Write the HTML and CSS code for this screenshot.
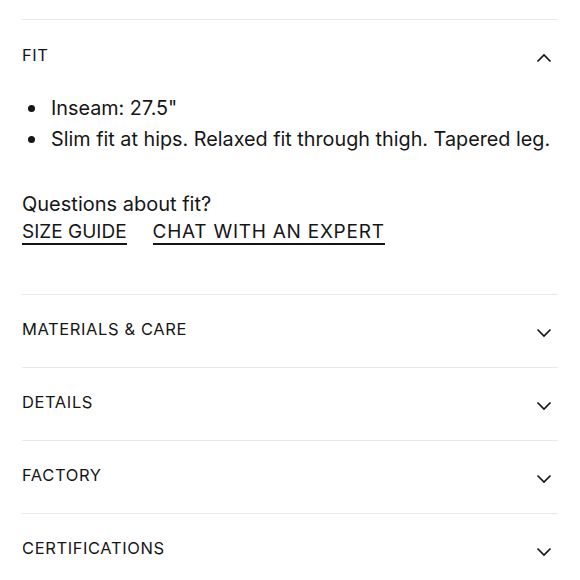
FILE: index.html
```html
<!DOCTYPE html>
<html lang="en">
<head>
<meta charset="utf-8">
<link rel="stylesheet" href="styles.css">
</head>
<body>
<div class="accordion">
  <section class="item open">
    <div class="item-header">
      <span class="item-title">FIT</span>
      <svg class="chevron" width="16" height="10" viewBox="0 0 16 10"><polyline points="1.5,8.5 8,2 14.5,8.5" fill="none" stroke="#111" stroke-width="1.6"/></svg>
    </div>
    <div class="item-body">
      <ul class="bullets">
        <li>Inseam: 27.5"</li>
        <li>Slim fit at hips. Relaxed fit through thigh. Tapered leg.</li>
      </ul>
      <p class="question">Questions about fit?</p>
      <div class="links">
        <a class="link" href="#">SIZE GUIDE</a>
        <a class="link link-wide" href="#">CHAT WITH AN EXPERT</a>
      </div>
    </div>
  </section>
  <section class="item">
    <div class="item-header">
      <span class="item-title">MATERIALS &amp; CARE</span>
      <svg class="chevron" width="16" height="10" viewBox="0 0 16 10"><polyline points="1.5,1.5 8,8 14.5,1.5" fill="none" stroke="#111" stroke-width="1.6"/></svg>
    </div>
  </section>
  <section class="item">
    <div class="item-header">
      <span class="item-title">DETAILS</span>
      <svg class="chevron" width="16" height="10" viewBox="0 0 16 10"><polyline points="1.5,1.5 8,8 14.5,1.5" fill="none" stroke="#111" stroke-width="1.6"/></svg>
    </div>
  </section>
  <section class="item">
    <div class="item-header">
      <span class="item-title">FACTORY</span>
      <svg class="chevron" width="16" height="10" viewBox="0 0 16 10"><polyline points="1.5,1.5 8,8 14.5,1.5" fill="none" stroke="#111" stroke-width="1.6"/></svg>
    </div>
  </section>
  <section class="item">
    <div class="item-header">
      <span class="item-title">CERTIFICATIONS</span>
      <svg class="chevron" width="16" height="10" viewBox="0 0 16 10"><polyline points="1.5,1.5 8,8 14.5,1.5" fill="none" stroke="#111" stroke-width="1.6"/></svg>
    </div>
  </section>
</div>
</body>
</html>
```

FILE: styles.css
```css
* { box-sizing: border-box; }
body {
  margin: 0;
  background: #fff;
  color: #161616;
  font-family: Inter, "Liberation Sans", sans-serif;
}
.accordion {
  padding: 19px 22px 0 22px;
}
.item {
  border-top: 1px solid #e8e8e8;
}
.item-header {
  display: flex;
  justify-content: space-between;
  align-items: center;
  height: 72px;
  padding-right: 6px;
}
.item-title {
  font-size: 16.5px;
  letter-spacing: 0.6px;
  line-height: 20px;
  margin-top: -4px;
}
.chevron {
  display: block;
  margin-top: 3px;
}
.item.open .item-header { height: 73px; }
.item-body {
  padding-bottom: 49px;
}
.bullets {
  list-style: none;
  margin: 0;
  padding: 0;
  font-size: 19.8px;
  line-height: 31px;
}
.bullets li {
  display: flex;
  align-items: center;
}
.bullets li::before {
  content: "";
  width: 7px;
  height: 7px;
  border-radius: 50%;
  background: #161616;
  margin: 0 16px 0 6px;
  flex: none;
}
.question {
  margin: 34px 0 0 0;
  font-size: 20px;
  line-height: 30px;
}
.links {
  display: flex;
  gap: 26px;
  margin-top: 1px;
}
.link {
  color: #161616;
  text-decoration: none;
  font-size: 19px;
  letter-spacing: 0;
  line-height: 23px;
  border-bottom: 2px solid #161616;
}
.link-wide {
  letter-spacing: 0.75px;
}
```
